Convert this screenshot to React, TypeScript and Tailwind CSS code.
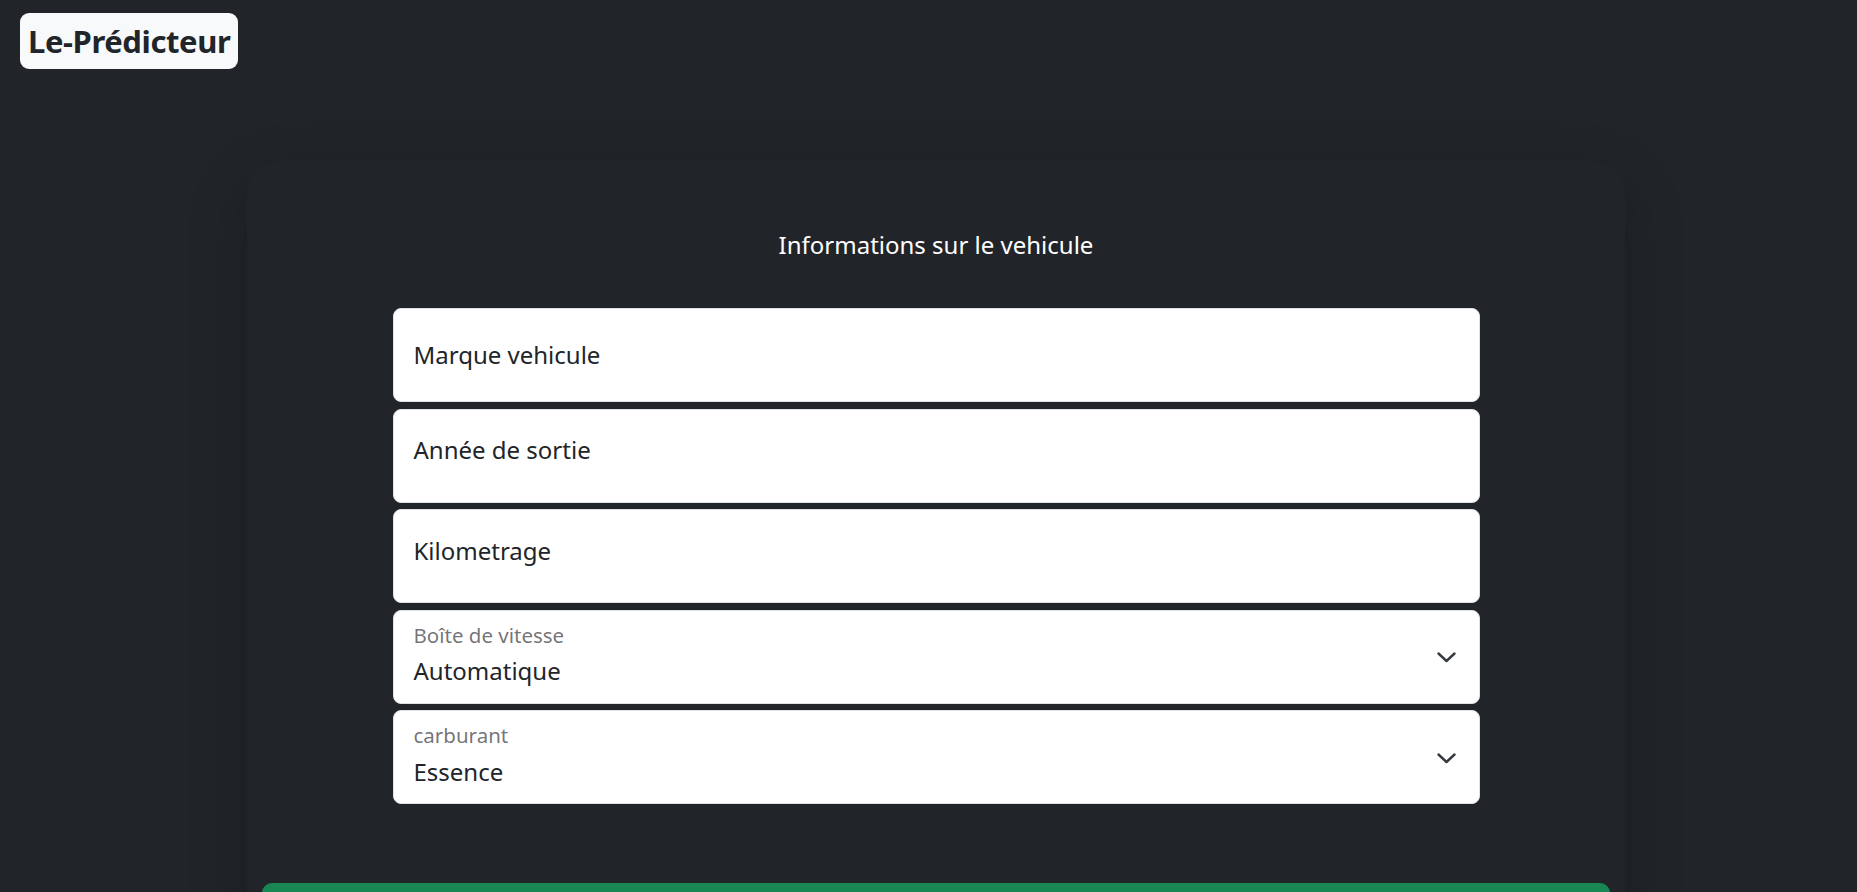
import React from "react";

const font = { fontFamily: '"Noto Sans", "Open Sans", sans-serif' };

type FieldProps = {
  label: string;
  raised?: boolean;
};

const TextField = ({ label, raised }: FieldProps) => {
  return (
    <div className="h-[94px] w-full bg-white border border-[#dee2e6] rounded-[8px] flex items-center px-[20px]">
      <span className={raised ? "text-[24px] text-[#212529] leading-none mt-[-11px]" : "text-[24px] text-[#212529] leading-none"}>
        {label}
      </span>
    </div>
  );
};

type SelectFieldProps = {
  label: string;
  value: string;
};

const SelectField = ({ label, value }: SelectFieldProps) => {
  return (
    <div className="h-[94px] w-full bg-white border border-[#dee2e6] rounded-[8px] flex items-center justify-between pl-[20px] pr-[23px]">
      <div className="flex flex-col">
        <span className="text-[20.5px] text-[#212529a6] leading-none mt-[-5px]">{label}</span>
        <span className="text-[24px] text-[#212529] leading-none mt-[14px]">{value}</span>
      </div>
      <svg width="19" height="11" viewBox="0 0 19 11" fill="none" className="mt-[2px]">
        <polyline
          points="1.5,1.5 9.5,9 17.5,1.5"
          stroke="#343a40"
          strokeWidth="2.4"
          strokeLinecap="round"
          strokeLinejoin="round"
        />
      </svg>
    </div>
  );
};

export default function App() {
  return (
    <div className="h-[892px] w-full bg-[#212529] overflow-hidden" style={font}>
      <header className="pt-[13px] pl-[20px]">
        <div className="inline-flex items-center h-[56px] px-[8px] bg-[#f8f9fa] rounded-[9px]">
          <span className="text-[31px] font-bold text-[#212529] leading-none tracking-[-0.4px]">
            Le-Prédicteur
          </span>
        </div>
      </header>

      <main className="ml-[247px] w-[1378px] mt-[92px]">
        <div className="bg-[#212529] rounded-[32px] shadow-[0_20px_60px_rgba(0,0,0,0.22)] pt-[70px] px-[15px] pb-[60px]">
          <h4 className="text-center text-white text-[24px] leading-[28px]">
            Informations sur le vehicule
          </h4>

          <form className="mt-[49px] mx-auto w-[1087px] flex flex-col gap-[6.5px]">
            <TextField label="Marque vehicule" />
            <TextField label="Année de sortie" raised />
            <TextField label="Kilometrage" raised />
            <SelectField label="Boîte de vitesse" value="Automatique" />
            <SelectField label="carburant" value="Essence" />
          </form>

          <button
            type="button"
            aria-label="Predire"
            className="mt-[79px] w-full h-[70px] bg-[#198754] rounded-[10px]"
          />
        </div>
      </main>
    </div>
  );
}
